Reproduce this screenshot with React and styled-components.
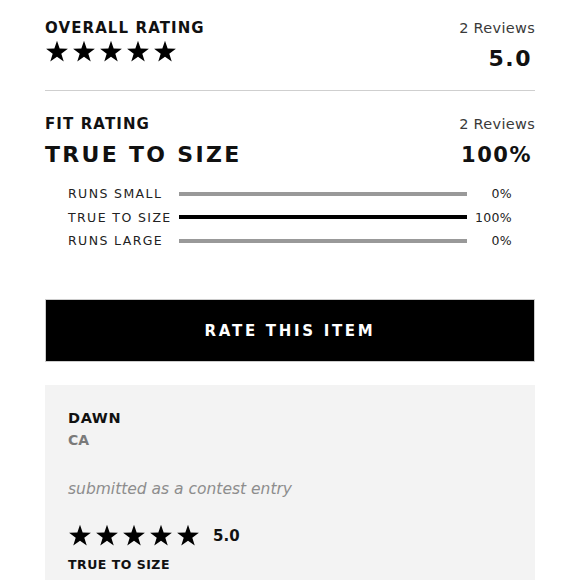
import React from "react";
import styled, { createGlobalStyle } from "styled-components";

const Global = createGlobalStyle`
  html, body { margin: 0; padding: 0; background: #fff; }
  body { font-family: "DejaVu Sans", "Liberation Sans", sans-serif; color: #111; }
`;

const Page = styled.div`
  width: 490px;
  margin: 0 auto;
  padding-top: 17px;
`;

const Section = styled.section`
  padding-bottom: ${(p) => p.$pb || 0}px;
  border-bottom: ${(p) => (p.$divider ? "1px solid #cfcfcf" : "none")};
  margin-bottom: ${(p) => p.$mb || 0}px;
`;

const HeadRow = styled.div`
  display: flex;
  justify-content: space-between;
  align-items: flex-start;
`;

const Label = styled.div`
  font-weight: 700;
  font-size: 15px;
  letter-spacing: 1.1px;
  line-height: 22px;
`;

const Count = styled.div`
  font-size: 14.5px;
  color: #3a3a3a;
  line-height: 22px;
  letter-spacing: 0.3px;
`;

const ValueRow = styled.div`
  display: flex;
  justify-content: space-between;
  align-items: ${(p) => p.$align || "center"};
  margin-top: ${(p) => p.$mt || 0}px;
`;

const BigValue = styled.div`
  font-weight: 700;
  font-size: ${(p) => p.$size || 20}px;
  letter-spacing: ${(p) => p.$ls || 1}px;
  line-height: 28px;
  padding-right: 3px;
  margin-top: ${(p) => p.$mt || 0}px;
`;

const Stars = styled.div`
  display: flex;
  gap: ${(p) => p.$gap}px;
  margin-top: ${(p) => p.$mt || 0}px;
`;

const StarIcon = ({ size }) => (
  <svg width={size} height={size} viewBox="0 0 24 24">
    <path
      d="M12 0.8 L14.65 8.6 L22.9 8.7 L16.3 13.65 L18.75 21.55 L12 16.8 L5.25 21.55 L7.7 13.65 L1.1 8.7 L9.35 8.6 Z"
      fill="#000"
    />
  </svg>
);

const Bars = styled.div`
  display: grid;
  grid-template-columns: 111px 1fr 45px;
  row-gap: 4px;
  padding: 15px 23px 0 23px;
  align-items: center;
`;

const BarLabel = styled.div`
  font-size: 12.5px;
  letter-spacing: 1.4px;
  color: #222;
  line-height: 19.5px;
  white-space: nowrap;
`;

const Track = styled.div`
  height: 4px;
  background: ${(p) => (p.$active ? "#000" : "#999")};
`;

const Pct = styled.div`
  font-size: 12.5px;
  color: #222;
  text-align: right;
  letter-spacing: 0.3px;
`;

const Button = styled.button`
  display: block;
  width: 100%;
  height: 63px;
  border: 1px solid #ccc;
  background: #000;
  color: #fff;
  font-family: inherit;
  font-weight: 700;
  font-size: 15px;
  letter-spacing: 2.7px;
  cursor: pointer;
  margin-top: 48px;
  padding-top: 2px;
`;

const Card = styled.div`
  background: #f3f3f3;
  margin-top: 23px;
  padding: 22px 23px 20px;
  min-height: 200px;
`;

const Name = styled.div`
  font-weight: 700;
  font-size: 14.5px;
  letter-spacing: 0.6px;
  line-height: 22px;
`;

const Loc = styled.div`
  font-weight: 700;
  font-size: 14px;
  color: #7a7a7a;
  line-height: 22px;
`;

const Note = styled.div`
  font-style: italic;
  font-size: 15.5px;
  color: #8d8d8d;
  margin-top: 27px;
  line-height: 22px;
`;

const RatingLine = styled.div`
  display: flex;
  align-items: center;
  gap: 13px;
  margin-top: 24px;
`;

const SmallScore = styled.div`
  font-weight: 700;
  font-size: 15px;
`;

const FitTag = styled.div`
  font-weight: 700;
  font-size: 12.5px;
  letter-spacing: 0.5px;
  margin-top: 9px;
`;

const rows = [
  { label: "RUNS SMALL", pct: 0 },
  { label: "TRUE TO SIZE", pct: 100 },
  { label: "RUNS LARGE", pct: 0 },
];

export default function App() {
  return (
    <>
      <Global />
      <Page>
        <Section $divider $pb={17} $mb={22}>
          <HeadRow>
            <Label>OVERALL RATING</Label>
            <Count>2 Reviews</Count>
          </HeadRow>
          <ValueRow $align="flex-start">
            <Stars $gap={3} $mt={1}>
              {[0, 1, 2, 3, 4].map((i) => (
                <StarIcon key={i} size={24} />
              ))}
            </Stars>
            <BigValue $size={22} $ls={1.5} $mt={6}>5.0</BigValue>
          </ValueRow>
        </Section>
        <Section>
          <HeadRow>
            <Label>FIT RATING</Label>
            <Count>2 Reviews</Count>
          </HeadRow>
          <ValueRow $mt={6}>
            <BigValue $size={22} $ls={2.3}>TRUE TO SIZE</BigValue>
            <BigValue $size={21} $ls={1.5}>100%</BigValue>
          </ValueRow>
          <Bars>
            {rows.map((r) => (
              <React.Fragment key={r.label}>
                <BarLabel>{r.label}</BarLabel>
                <Track $active={r.pct > 0} />
                <Pct>{r.pct}%</Pct>
              </React.Fragment>
            ))}
          </Bars>
        </Section>
        <Button>RATE THIS ITEM</Button>
        <Card>
          <Name>DAWN</Name>
          <Loc>CA</Loc>
          <Note>submitted as a contest entry</Note>
          <RatingLine>
            <Stars $gap={3}>
              {[0, 1, 2, 3, 4].map((i) => (
                <StarIcon key={i} size={24} />
              ))}
            </Stars>
            <SmallScore>5.0</SmallScore>
          </RatingLine>
          <FitTag>TRUE TO SIZE</FitTag>
        </Card>
      </Page>
    </>
  );
}
